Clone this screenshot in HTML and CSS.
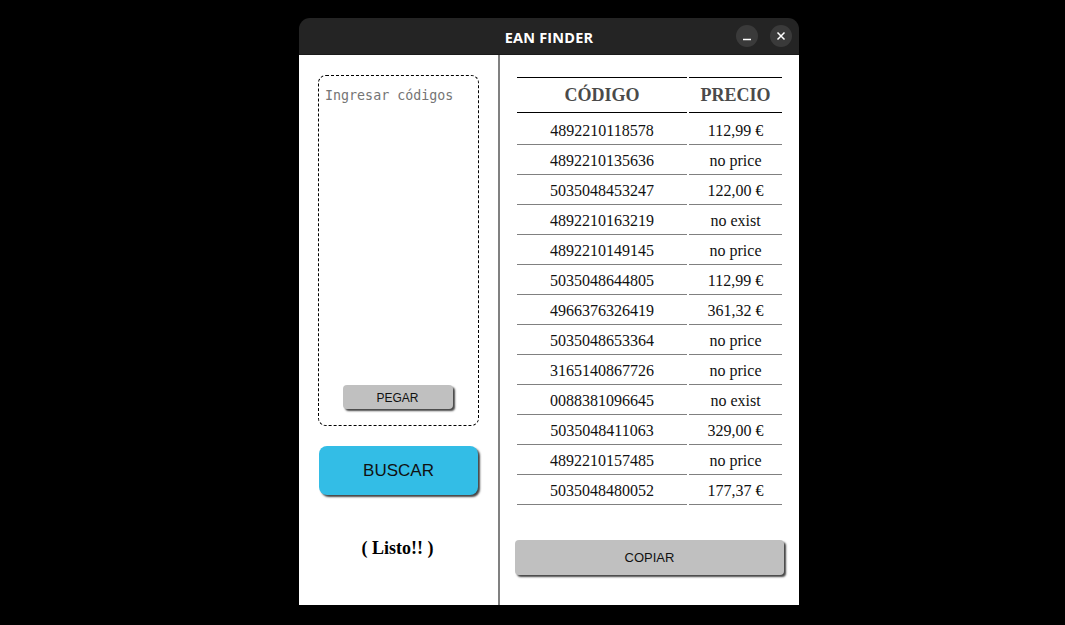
FILE: index.html
```html
<!DOCTYPE html>
<html lang="es">
<head>
<meta charset="utf-8">
<title>EAN FINDER</title>
<link rel="stylesheet" href="styles.css">
</head>
<body>
<div class="window">
  <div class="titlebar">
    <span class="title">EAN FINDER</span>
    <div class="controls">
      <span class="ctl"><svg width="22" height="22" viewBox="0 0 22 22"><line x1="7" y1="14.5" x2="15" y2="14.5" stroke="#fff" stroke-width="1.5"/></svg></span>
      <span class="ctl"><svg width="22" height="22" viewBox="0 0 22 22"><path d="M7.5 7.5 L14.5 14.5 M14.5 7.5 L7.5 14.5" stroke="#fff" stroke-width="1.5"/></svg></span>
    </div>
  </div>
  <div class="content">
    <div class="left">
      <div class="inputbox">
        <textarea class="codes" placeholder="Ingresar códigos"></textarea>
        <button class="btn pegar">PEGAR</button>
      </div>
      <button class="btn buscar">BUSCAR</button>
      <div class="status">( Listo!! )</div>
    </div>
    <div class="right">
      <div class="table">
        <div class="th">CÓDIGO</div><div class="th">PRECIO</div>
        <div class="td">4892210118578</div><div class="td">112,99 €</div>
        <div class="td">4892210135636</div><div class="td">no price</div>
        <div class="td">5035048453247</div><div class="td">122,00 €</div>
        <div class="td">4892210163219</div><div class="td">no exist</div>
        <div class="td">4892210149145</div><div class="td">no price</div>
        <div class="td">5035048644805</div><div class="td">112,99 €</div>
        <div class="td">4966376326419</div><div class="td">361,32 €</div>
        <div class="td">5035048653364</div><div class="td">no price</div>
        <div class="td">3165140867726</div><div class="td">no price</div>
        <div class="td">0088381096645</div><div class="td">no exist</div>
        <div class="td">5035048411063</div><div class="td">329,00 €</div>
        <div class="td">4892210157485</div><div class="td">no price</div>
        <div class="td">5035048480052</div><div class="td">177,37 €</div>
      </div>
      <button class="btn copiar">COPIAR</button>
    </div>
  </div>
</div>
</body>
</html>
```

FILE: styles.css
```css
html, body {
  margin: 0;
  padding: 0;
  background: #000;
  height: 625px;
  overflow: hidden;
}
.window {
  width: 500px;
  margin: 18px 0 0 299px;
  display: flex;
  flex-direction: column;
}
.titlebar {
  height: 37px;
  background: #242424;
  border-radius: 11px 11px 0 0;
  box-sizing: border-box;
  border-bottom: 1px solid #1a1a1a;
  display: flex;
  align-items: center;
  justify-content: center;
  position: relative;
}
.title {
  color: #fff;
  font-family: "Open Sans", "DejaVu Sans", sans-serif;
  font-weight: 700;
  font-size: 14.5px;
  letter-spacing: 0.2px;
  padding-top: 2px;
}
.controls {
  position: absolute;
  right: 7px;
  top: 7px;
  display: flex;
  gap: 12px;
}
.ctl {
  width: 22px;
  height: 22px;
  border-radius: 50%;
  background: #3a3a3a;
  display: block;
}
.ctl svg { display: block; }
.content {
  height: 550px;
  background: #fff;
  display: flex;
}
.left {
  width: 180px;
  border-right: 2px solid #808080;
  display: flex;
  flex-direction: column;
  align-items: flex-start;
  padding: 20px 0 0 19px;
}
.inputbox {
  width: 161px;
  height: 351px;
  box-sizing: border-box;
  border: 1px dashed #000;
  border-radius: 8px;
  display: flex;
  flex-direction: column;
  align-items: center;
}
.codes {
  width: 100%;
  flex: 1;
  border: none;
  outline: none;
  resize: none;
  background: transparent;
  font-family: "DejaVu Sans Mono", monospace;
  font-size: 13.33px;
  padding: 12px 6px;
  box-sizing: border-box;
}
.codes::placeholder { color: #757575; }
.btn {
  font-family: "Liberation Sans", Arial, sans-serif;
  color: #111;
  border: none;
  background: #c0c0c0;
  border-radius: 4px;
  box-shadow: 2px 2px 2px #444;
  padding: 0;
}
.pegar {
  width: 110px;
  height: 24px;
  font-size: 12px;
  padding-top: 1px;
  margin: 0 0 16px -2px;
}
.buscar {
  width: 159px;
  height: 49px;
  background: #33bde6;
  border-radius: 8px;
  font-size: 17px;
  margin: 20px 0 0 1px;
}
.status {
  width: 159px;
  text-align: center;
  font-family: "Liberation Serif", "Times New Roman", serif;
  font-weight: 700;
  font-size: 18px;
  margin-top: 43px;
}
.right {
  width: 299px;
  padding: 22px 0 0 17px;
  box-sizing: border-box;
  display: flex;
  flex-direction: column;
}
.table {
  display: grid;
  grid-template-columns: 170px 93px;
  column-gap: 2px;
  font-family: "Liberation Serif", "Times New Roman", serif;
}
.th {
  height: 36px;
  box-sizing: border-box;
  border-top: 1px solid #000;
  border-bottom: 1px solid #000;
  display: flex;
  align-items: center;
  justify-content: center;
  font-weight: 700;
  font-size: 18px;
  color: #4a4a4a;
  margin-bottom: 2px;
}
.td {
  height: 30px;
  box-sizing: border-box;
  border-bottom: 1px solid #808080;
  padding-top: 2px;
  display: flex;
  align-items: center;
  justify-content: center;
  font-size: 16px;
  color: #111;
}
.copiar {
  width: 269px;
  height: 35px;
  font-size: 13px;
  margin: 35px 0 0 -2px;
}
```
